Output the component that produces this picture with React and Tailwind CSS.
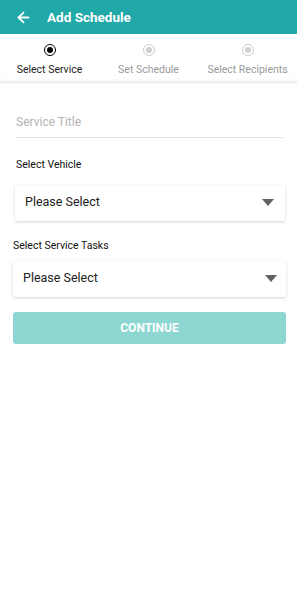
import React from 'react';
import { ArrowLeft } from 'lucide-react';

const steps = [
  { label: 'Select Service', active: true },
  { label: 'Set Schedule', active: false },
  { label: 'Select Recipients', active: false },
];

function Radio({ active }) {
  if (active) {
    return (
      <div className="w-[12px] h-[12px] rounded-full border border-black flex items-center justify-center">
        <div className="w-[6px] h-[6px] rounded-full bg-black" />
      </div>
    );
  }
  return (
    <div className="w-[12px] h-[12px] rounded-full border border-[#cfcfcf] flex items-center justify-center">
      <div className="w-[6px] h-[6px] rounded-full bg-[#cfcfcf]" />
    </div>
  );
}

function SelectBox({ className }) {
  return (
    <div className={'h-[36px] bg-white rounded-[2px] shadow-[0_1px_3px_rgba(0,0,0,0.18)] flex items-center justify-between ' + className}>
      <span className="text-[12.5px] text-[#222]">Please Select</span>
      <svg width="12" height="7" viewBox="0 0 12 7"><path d="M0 0h12L6 7z" fill="#616161" /></svg>
    </div>
  );
}

export default function App() {
  return (
    <div className="w-[297px] h-[592px] bg-white font-['Roboto',sans-serif] overflow-hidden">
      <div className="h-[34px] bg-[#20a9a8] flex items-center pl-[15px]">
        <ArrowLeft size={17} strokeWidth={2.5} className="text-white" />
        <span className="ml-[15px] text-white font-bold text-[13.5px]">Add Schedule</span>
      </div>

      <div className="h-[49px] border-b border-[#e6e6e6] grid grid-cols-3 shadow-[0_-2px_3px_rgba(0,0,0,0.04)_inset]">
        {steps.map((s) => (
          <div key={s.label} className="flex flex-col items-center pt-[10px]">
            <Radio active={s.active} />
            <span className={'mt-[6px] text-[10.5px] whitespace-nowrap ' + (s.active ? 'text-[#222]' : 'text-[#9a9a9a]')}>
              {s.label}
            </span>
          </div>
        ))}
      </div>

      <div className="pt-[26px]">
        <div className="mx-[16px] mr-[13px] border-b border-[#e4e4e4] pb-[4px]">
          <span className="text-[12px] text-[#b3b3b3]">Service Title</span>
        </div>

        <div className="mt-[19px] ml-[16px] text-[10.5px] text-[#111]">Select Vehicle</div>
        <SelectBox className="mt-[12px] ml-[15px] mr-[12px] pl-[10px] pr-[11px]" />

        <div className="mt-[17px] ml-[13px] text-[10.5px] text-[#111]">Select Service Tasks</div>
        <SelectBox className="mt-[7px] ml-[13px] mr-[11px] pl-[10px] pr-[9px]" />

        <div className="mt-[15px] mx-[13px] mr-[11px] h-[32px] rounded-[3px] bg-[#8dd6d2] flex items-center justify-center">
          <span className="text-white text-[12px] font-bold">CONTINUE</span>
        </div>
      </div>
    </div>
  );
}
